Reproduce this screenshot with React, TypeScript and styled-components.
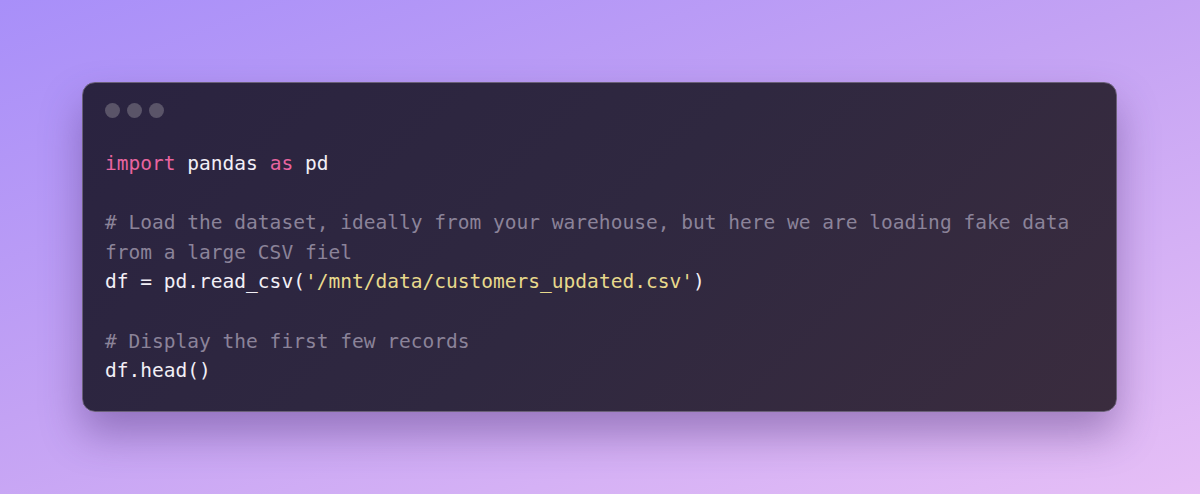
import React from "react";
import styled, { createGlobalStyle } from "styled-components";

const Global = createGlobalStyle`
  html, body { margin: 0; padding: 0; }
  body {
    width: 1200px;
    height: 494px;
    overflow: hidden;
    background: linear-gradient(160deg, #a88ff9 0%, #c3a2f4 45%, #e6bff6 100%);
  }
`;

const Stage = styled.div`
  width: 1200px;
  height: 494px;
  box-sizing: border-box;
  padding: 82px 83px 0 82px;
`;

const Card = styled.div`
  box-sizing: border-box;
  height: 330px;
  border-radius: 13px;
  border: 1.5px solid #6a6078;
  background: linear-gradient(135deg, #2a2340 0%, #2f2840 50%, #3a2c3e 100%);
  box-shadow: 0 22px 40px rgba(70, 40, 110, 0.4);
  padding: 20px 22px 0 22px;
`;

const Dots = styled.div`
  display: flex;
  gap: 7px;
  height: 16px;
`;

const Dot = styled.span`
  width: 15px;
  height: 15px;
  border-radius: 50%;
  background: #5a5468;
`;

const Code = styled.pre`
  margin: 30px 0 0 0;
  font-family: "DejaVu Sans Mono", "Liberation Mono", monospace;
  font-size: 19.55px;
  line-height: 29.6px;
  color: #f2eff6;
  white-space: pre;
`;

const Tok = styled.span<{ $kind: "kw" | "cm" | "str" }>`
  color: ${(p) =>
    p.$kind === "kw" ? "#e8649f" : p.$kind === "cm" ? "#8b8399" : "#e8d98c"};
`;

export default function App() {
  return (
    <>
      <Global />
      <Stage>
        <Card>
          <Dots>
            <Dot />
            <Dot />
            <Dot />
          </Dots>
          <Code>
            <Tok $kind="kw">import</Tok> pandas <Tok $kind="kw">as</Tok> pd{"\n"}
            {"\n"}
            <Tok $kind="cm">
              # Load the dataset, ideally from your warehouse, but here we are loading fake data
            </Tok>
            {"\n"}
            <Tok $kind="cm">from a large CSV fiel</Tok>
            {"\n"}
            df = pd.read_csv(<Tok $kind="str">'/mnt/data/customers_updated.csv'</Tok>){"\n"}
            {"\n"}
            <Tok $kind="cm"># Display the first few records</Tok>
            {"\n"}
            df.head()
          </Code>
        </Card>
      </Stage>
    </>
  );
}
